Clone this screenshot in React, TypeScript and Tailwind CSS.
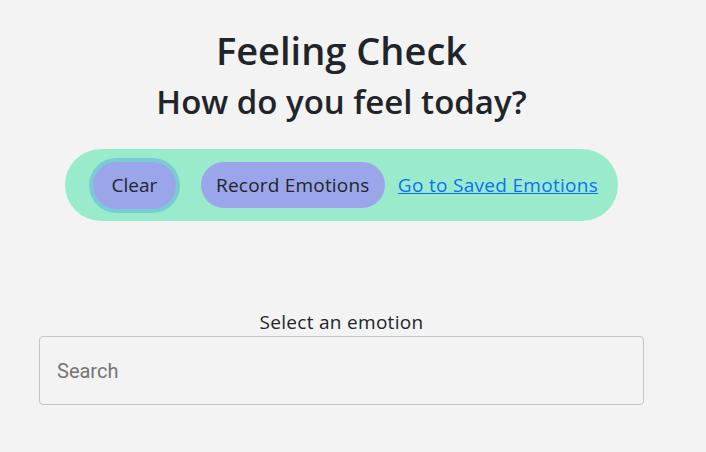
export default function App() {
  return (
    <div className="min-h-screen w-full bg-[#f3f3f3] text-[#212529] font-['Open_Sans',sans-serif]">
      <div className="w-[683px] flex flex-col items-center">
        {/* Headings */}
        <h1 className="mt-[26px] text-[38px] leading-[48px] font-semibold">Feeling Check</h1>
        <h2 className="mt-[8px] text-[33px] leading-[40px] font-semibold">How do you feel today?</h2>

        {/* Action bar */}
        <div className="mt-[27px] h-[72px] flex items-center bg-[#99ebcb] rounded-full pl-[28px] pr-[20px]">
          <button className="h-[47px] w-[83px] rounded-full bg-[#9ba6ea] text-[19px] ring-4 ring-[#79ccd6]">
            Clear
          </button>
          <button className="ml-[25px] h-[46px] w-[184px] rounded-full bg-[#9ba6ea] text-[19px] tracking-[0.2px]">
            Record Emotions
          </button>
          <a href="#" className="ml-[13px] text-[19px] tracking-[0.3px] text-[#0d6efd] underline">
            Go to Saved Emotions
          </a>
        </div>

        {/* Emotion search */}
        <div className="mt-[88px] w-full px-[39px] flex flex-col items-center">
          <label className="text-[19px] leading-[26px] tracking-[0.3px]">Select an emotion</label>
          <input
            placeholder="Search"
            className="mt-[1px] w-full h-[69px] px-[17px] bg-transparent border border-[#c4c4c4] rounded-[4px] text-[20px] font-['Roboto',sans-serif] placeholder:text-[#757575] outline-none"
          />
        </div>
      </div>
    </div>
  );
}
